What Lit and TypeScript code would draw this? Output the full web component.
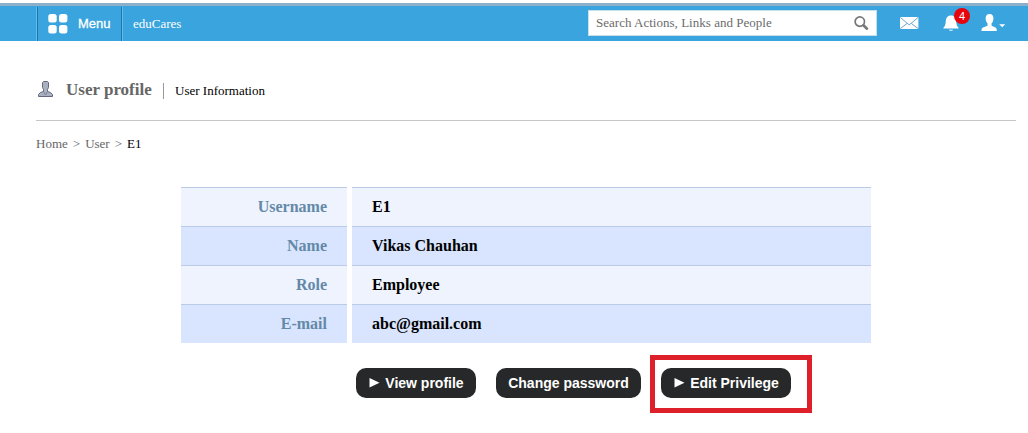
import { LitElement, html, css } from "lit";
import { customElement } from "lit/decorators.js";

const rows: [string, string][] = [
  ["Username", "E1"],
  ["Name", "Vikas Chauhan"],
  ["Role", "Employee"],
  ["E-mail", "abc@gmail.com"],
];

@customElement("top-bar")
class TopBar extends LitElement {
  static styles = css`
    :host { display: flex; height: 35px; margin-top: 3px; border-top: 3px solid #8cb0c9; background: #39a4dd; color: #fff; padding-left: 37px; padding-right: 21px; }
    svg { display: block; flex: none; }
    .menu { box-sizing: border-box; width: 85px; height: 34px; margin-top: 1px; border-left: 1px solid #1b78ab; border-right: 1px solid #1b78ab; box-shadow: -1px 0 #63bbe8, 1px 0 #63bbe8; display: flex; align-items: center; padding-left: 10px; gap: 10px; font: 13px/16px "Liberation Sans", Arial, sans-serif; -webkit-text-stroke: 0.3px #fff; white-space: nowrap; }
    .brand { font: 13px/16px "Liberation Serif", "Times New Roman", serif; margin: 10px 0 0 11px; width: 455px; flex: none; }
    .search { box-sizing: border-box; width: 289px; height: 26px; margin-top: 4px; background: #fff; border: 1px solid #c7dfec; display: flex; flex: none; justify-content: space-between; padding: 0 7px 0 7px; color: #6b6b6b; font: 13px/24px "Liberation Serif", "Times New Roman", serif; letter-spacing: 0.02px; white-space: nowrap; }
    .search svg { margin-top: 5px; }
    .mail { margin: 11px 0 0 23px; }
    .bell { position: relative; margin: 9px 0 0 24px; width: 16px; height: 17px; flex: none; }
    .badge { position: absolute; left: 11px; top: -7px; width: 16px; height: 16px; border-radius: 8px; background: #e9040b; font: 11px/16px "Liberation Sans", Arial, sans-serif; text-align: center; }
    .person { margin: 8px 0 0 22px; }
  `;
  render() {
    return html`
      <div class="menu">
        <svg width="20" height="20" viewBox="0 0 20 20" fill="#fff"><rect x=".3" width="8.4" height="8.4" rx="2.5"/><rect x="11" width="8.4" height="8.4" rx="2.5"/><rect x=".3" y="11" width="8.4" height="8.4" rx="2.5"/><rect x="11" y="11" width="8.4" height="8.4" rx="2.5"/></svg>
        <span>Menu</span>
      </div>
      <div class="brand">eduCares</div>
      <div class="search"><span>Search Actions, Links and People</span>
        <svg width="15" height="15" viewBox="0 0 15 15" fill="none" stroke="#777"><circle cx="5.8" cy="5.6" r="4.7" stroke-width="1.7"/><path d="M9.4 9.200 13 12.7" stroke-width="2.6" stroke-linecap="round"/></svg>
      </div>
      <svg class="mail" width="19" height="12" viewBox="0 0 19 12"><rect width="18.4" height="12" rx=".8" fill="#fff"/><path d="M.5.5 7.2 6.3.5 11.5M18 .5 11.2 6.3 18 11.5M7.2 6.3 9.2 7.8 11.2 6.3" fill="none" stroke="#6fa3cf" stroke-width="1"/></svg>
      <div class="bell">
        <svg width="16" height="17" viewBox="0 0 16 17" fill="#fff"><path d="M8 .5C4.300.5 3 3 2.800 6 2.600 9.500 2 11.300.4 12.700V13.600H15.500V12.700C14 11.300 13.400 9.500 13.200 6 13 3 11.700.5 8 .5ZM5.800 14.700H10.200C9.700 16.200 6.300 16.200 5.800 14.700Z"/></svg>
        <span class="badge">4</span>
      </div>
      <svg class="person" width="25" height="18" viewBox="0 0 25 18" fill="#fff"><path d="M8.500 0C5.800 0 4.600 1.800 4.700 4.400 4.700 6.400 5.300 8.100 6.500 9.300V11.700L2 13.400C.8 13.900.5 14.800.5 17H15.800C15.800 14.800 15.500 13.900 14.500 13.400L10.600 11.700V9.300C11.800 8.100 12.400 6.400 12.400 4.400 12.500 1.800 11.200 0 8.500 0ZM18.200 10.200H24.200L21.200 13.200Z"/></svg>
    `;
  }
}

@customElement("app-root")
class AppRoot extends LitElement {
  static styles = css`
    :host { display: block; height: 433px; overflow: hidden; background: #fff; font-family: "Liberation Serif", "Times New Roman", serif; color: #000; }
    .title { box-sizing: border-box; height: 80px; margin: 0 12px 0 36px; border-bottom: 1px solid #c6c6c6; display: flex; padding-top: 39px; white-space: nowrap; }
    .title svg { display: block; margin: 1px 0 0 1px; flex: none; }
    h1 { margin: 0 0 0 12px; font-size: 17px; line-height: 20px; color: #666; width: 97px; }
    .sub { font-size: 13px; line-height: 16px; height: 16px; border-left: 1px solid #999; padding-left: 11px; margin-top: 3px; }
    .sub span { display: block; }
    .crumbs { margin: 15px 0 0 36px; font-size: 13px; line-height: 16px; color: #666; display: flex; gap: 5px; }
    .crumbs b { font-weight: normal; color: #000; }
    .grid { width: 690px; margin: 35px 0 0 181px; display: grid; grid-template-columns: 166px 519px; column-gap: 5px; font-weight: bold; font-size: 16px; line-height: 38px; }
    .cell { height: 38px; border-top: 1px solid #b9cbe6; background: #eff3fe; padding-left: 20px; }
    .cell.alt { background: #d9e5fe; }
    .cell.label { text-align: right; padding: 0 20px 0 0; color: #6489a8; }
    .actions { display: flex; align-items: flex-start; margin: 12px 0 0 356px; }
    button { display: flex; align-items: center; justify-content: center; gap: 5px; width: 120px; height: 30px; margin-top: 13px; padding: 0 0 0 1px; border: 0; border-radius: 10px; background: #262829; color: #fff; font: bold 14px/30px "Liberation Sans", Arial, sans-serif; white-space: nowrap; }
    .wide { width: 145px; margin: 13px 9px 0 20px; padding: 0; }
    .edit { width: 130px; margin: 0; }
    .mark { border: 5px solid #dd202a; padding: 8px 16px 10px 6px; }
  `;
  render() {
    const arrow = html`<svg width="11" height="10" viewBox="0 0 11 10"><path d="M.5 0 10.500 4.800.5 9.600Z" fill="#fff"/></svg>`;
    return html`
      <top-bar></top-bar>
      <div class="title">
        <svg width="17" height="17" viewBox="0 0 17 17"><path d="M6.500.5H10.500L11.500 1.500V6.500L10.500 8.500V10.500L13.500 11.500 15.500 13.500V15.500H1.500V13.500L3.500 11.500 6.500 10.500V8.500L5.500 6.500V1.500Z" fill="#a9b0c0" stroke="#62687a"/><path d="M6.800 11 8.500 14 10.200 11" fill="none" stroke="#747b90" stroke-width=".8"/></svg>
        <h1>User profile</h1>
        <div class="sub"><span>User Information</span></div>
      </div>
      <div class="crumbs"><span>Home</span><span>&gt;</span><span>User</span><span>&gt;</span><b>E1</b></div>
      <div class="grid">
        ${rows.map(([label, value], i) => html`
          <div class="cell label ${i % 2 ? "alt" : ""}">${label}</div>
          <div class="cell ${i % 2 ? "alt" : ""}">${value}</div>`)}
      </div>
      <div class="actions">
        <button>${arrow}<span>View profile</span></button>
        <button class="wide">Change password</button>
        <div class="mark"><button class="edit">${arrow}<span>Edit Privilege</span></button></div>
      </div>
    `;
  }
}
